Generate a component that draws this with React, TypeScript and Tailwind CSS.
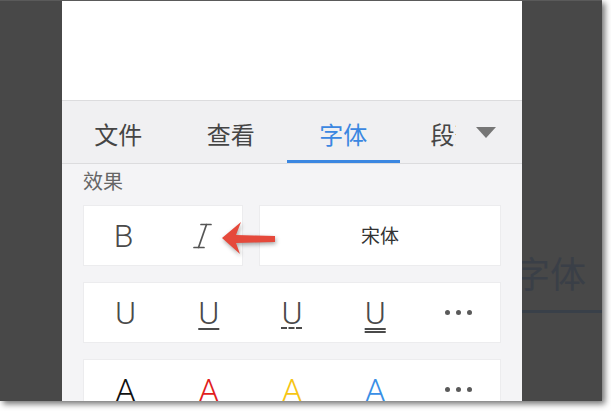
import React from "react";

const cjk = '"Noto Sans CJK SC", "Noto Sans", sans-serif';
const latin = 'Roboto, "Noto Sans CJK SC", sans-serif';

function Dots() {
    return (
        <div className="flex items-center gap-[6px]">
            <span className="w-[5px] h-[5px] rounded-full bg-[#5a5a5a]" />
            <span className="w-[5px] h-[5px] rounded-full bg-[#5a5a5a]" />
            <span className="w-[5px] h-[5px] rounded-full bg-[#5a5a5a]" />
        </div>
    );
}

function ItalicIcon() {
    return (
        <svg width="19" height="26" viewBox="0 0 19 26" fill="none" stroke="#555" strokeWidth="1.7" strokeLinecap="round">
            <line x1="8" y1="1.5" x2="18" y2="1.5" />
            <line x1="1" y1="24.5" x2="11" y2="24.5" />
            <line x1="13.5" y1="1.5" x2="5.5" y2="24.5" />
        </svg>
    );
}

function RedArrow() {
    return (
        <svg
            className="absolute left-[137px] top-[15px] drop-shadow-[1px_2px_2px_rgba(0,0,0,0.35)]"
            width="58"
            height="38"
            viewBox="0 0 58 38"
        >
            <polygon points="2,18 21,2 16,15 55,16 55,22 16,23 20,34" fill="#e5493b" />
        </svg>
    );
}

export default function App() {
    const tabs = ["文件", "查看", "字体"];

    return (
        <div className="w-[611px] h-[411px] bg-white overflow-hidden">
            <div className="w-[602px] h-[401px] bg-[#484848] border-t border-[#5a5a5a] flex shadow-[3px_3px_6px_rgba(0,0,0,0.55)]">
                <div className="w-[62px] shrink-0" />

                <div className="w-[460px] shrink-0 flex flex-col bg-[#f4f4f6] overflow-hidden" style={{ fontFamily: cjk }}>
                    <div className="h-[99px] shrink-0 bg-white" />

                    <div className="relative h-[64px] shrink-0 bg-[#f0f0f2] border-y border-[#dcdcde] flex overflow-hidden">
                        {tabs.map((t, i) => (
                            <div key={t} className="relative w-[112.5px] shrink-0 flex items-center justify-center pt-[3px]">
                                <span className={"text-[24px] leading-none whitespace-nowrap " + (i === 2 ? "text-[#3b87e1]" : "text-[#454545]")}>
                                    {t}
                                </span>
                                {i === 2 && <div className="absolute left-0 right-0 bottom-0 h-[3px] bg-[#3b87e1]" />}
                            </div>
                        ))}
                        <div className="flex-1 flex items-center pt-[3px] pl-[31px] overflow-hidden">
                            <span className="text-[24px] leading-none whitespace-nowrap text-[#454545]">段落</span>
                        </div>
                        <div className="absolute right-0 top-0 bottom-0 w-[66px] bg-[#f0f0f2] flex items-center justify-start pl-[20px]">
                            <div className="w-0 h-0 border-l-[10px] border-r-[10px] border-t-[11px] border-l-transparent border-r-transparent border-t-[#767676]" />
                        </div>
                    </div>

                    <div className="px-[21px] flex flex-col shrink-0">
                        <div className="h-[41px] shrink-0 pt-[3px] text-[20px] leading-[28px] text-[#666]">效果</div>

                        <div className="relative flex gap-[16px] shrink-0">
                            <div className="w-[160px] h-[61px] bg-white border border-[#ececee] flex">
                                <div className="flex-1 flex items-center justify-center">
                                    <span className="text-[32px] font-light text-[#4a4a4a]" style={{ fontFamily: latin }}>B</span>
                                </div>
                                <div className="flex-1 flex items-center justify-center">
                                    <ItalicIcon />
                                </div>
                            </div>
                            <div className="flex-1 h-[61px] bg-white border border-[#ececee] flex items-center justify-center">
                                <span className="text-[19px] text-[#333]">宋体</span>
                            </div>
                            <RedArrow />
                        </div>

                        <div className="mt-[16px] h-[61px] shrink-0 bg-white border border-[#ececee] grid grid-cols-5" style={{ fontFamily: latin }}>
                            <div className="flex items-center justify-center">
                                <span className="text-[32px] font-light text-[#4a4a4a] leading-none">U</span>
                            </div>
                            <div className="flex items-center justify-center">
                                <span className="text-[32px] font-light text-[#4a4a4a] leading-none underline decoration-[1.5px] underline-offset-[4px]">U</span>
                            </div>
                            <div className="flex items-center justify-center">
                                <span className="text-[32px] font-light text-[#4a4a4a] leading-none underline decoration-dashed decoration-[1.5px] underline-offset-[4px]">U</span>
                            </div>
                            <div className="flex items-center justify-center">
                                <span className="text-[32px] font-light text-[#4a4a4a] leading-none underline decoration-double decoration-[1.5px] underline-offset-[4px]">U</span>
                            </div>
                            <div className="flex items-center justify-center">
                                <Dots />
                            </div>
                        </div>

                        <div className="mt-[16px] h-[61px] shrink-0 bg-white border border-[#ececee] grid grid-cols-5" style={{ fontFamily: latin }}>
                            <div className="flex items-center justify-center">
                                <span className="text-[32px] font-light text-[#111]">A</span>
                            </div>
                            <div className="flex items-center justify-center">
                                <span className="text-[32px] font-light text-[#e11d1d]">A</span>
                            </div>
                            <div className="flex items-center justify-center">
                                <span className="text-[32px] font-light text-[#f6c514]">A</span>
                            </div>
                            <div className="flex items-center justify-center">
                                <span className="text-[32px] font-light text-[#3a8fe6]">A</span>
                            </div>
                            <div className="flex items-center justify-center">
                                <Dots />
                            </div>
                        </div>
                    </div>
                </div>

                <div className="flex-1 overflow-hidden flex flex-col" style={{ fontFamily: cjk }}>
                    <div className="h-[253px] shrink-0" />
                    <div className="-ml-[8px] text-[36px] leading-[36px] text-[#3a3f47] whitespace-nowrap">字体</div>
                    <div className="mt-[20px] h-[3px] bg-[#394049]" />
                </div>
            </div>
        </div>
    );
}
